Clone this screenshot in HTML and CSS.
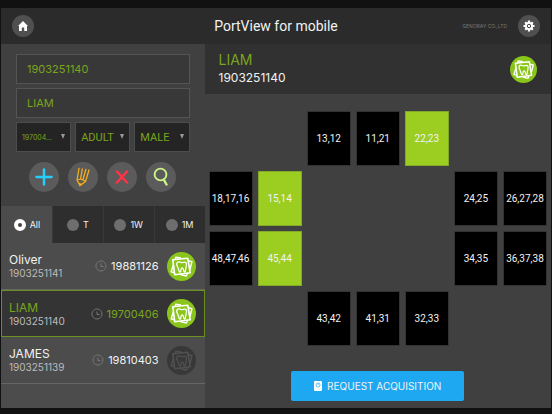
FILE: index.html
```html
<!DOCTYPE html>
<html lang="en">
<head>
  <meta charset="UTF-8" />
  <meta name="viewport" content="width=device-width, initial-scale=1.0"/>
  <title>PortView for mobile</title>
  <link rel="stylesheet" href="styles.css">
</head>
<body>
  <svg class="symbols" aria-hidden="true">
    <symbol id="tooth" viewBox="0 0 30 30">
      <g fill="none" stroke="currentColor" stroke-linejoin="round" stroke-linecap="round">
        <path stroke-width="1.700" d="M6 8 L21.500 6.500 L24 21.500 L8 23.500 Z"/>
        <path stroke-width="1.500" d="M8.500 7.500 L9 5.500 L14 6.300 M22 9 L25.800 10 L23.800 18 M21 22.500 L20 24.800 L14.500 23.500 M6.500 13.500 L4.300 20.500 L7.500 21.500"/>
        <path stroke-width="1.300" d="M10.800 10.500 C12.300 9.500 13.500 11 15.200 11 C17 11 18.500 9.500 19.800 11 C21 13.500 19.300 16 19 19.500 C18.800 21.300 17.500 21 17.200 19 C16.800 16.500 15.300 15.500 14.600 17.500 C14.300 19 14.500 21 13.200 20.800 C12 20.200 12.200 17.500 11 15.500 C9.800 13.500 9.600 12 10.800 10.500 Z"/>
      </g>
    </symbol>
    <symbol id="clock" viewBox="0 0 12 12">
      <path fill="none" stroke="currentColor" d="M6 1 A5 5 0 1 1 5.900 1 Z M6 3.500 V6.500 H8.500"/>
    </symbol>
  </svg>

  <div class="app">
    <header class="topbar">
      <a href="#" class="round small" aria-label="Home">
        <svg width="12" height="12" viewBox="0 0 12 12"><path fill="#fff" d="M6 1 L11 6 H10 V11 H7.200 V7.500 H4.800 V11 H2 V6 H1 Z"/></svg>
      </a>
      <h1>PortView for mobile</h1>
      <div class="topbar-end">
        <span class="company">GENORAY CO.,LTD</span>
        <button class="round small" aria-label="Settings">
          <svg width="12" height="12" viewBox="0 0 12 12">
            <path stroke="#fff" stroke-width="2.200" d="M6 .5 V11.500 M.5 6 H11.500 M2.200 2.200 L9.800 9.800 M9.800 2.200 L2.200 9.800"/>
            <circle cx="6" cy="6" r="4" fill="#fff"/>
            <circle cx="6" cy="6" r="1.700" fill="#fff" stroke="#444"/>
          </svg>
        </button>
      </div>
    </header>

    <aside>
      <form class="patient-form">
        <input type="text" class="field" aria-label="Patient ID" value="1903251140">
        <input type="text" class="field" aria-label="Patient name" value="LIAM">
        <div class="selects">
          <div class="select-box"><select class="tiny" aria-label="Birth date"><option>197004...</option></select></div>
          <div class="select-box"><select aria-label="Age group"><option>ADULT</option></select></div>
          <div class="select-box"><select aria-label="Sex"><option>MALE</option></select></div>
        </div>
        <div class="actions">
          <button type="button" class="round" aria-label="Add">
            <svg width="18" height="18" viewBox="0 0 18 18"><path stroke="#22cfff" stroke-width="2.500" stroke-linecap="round" d="M9 1.500 V16.500 M1.500 9 H16.500"/></svg>
          </button>
          <button type="button" class="round" aria-label="Edit">
            <svg width="18" height="20" viewBox="0 0 18 20"><path fill="none" stroke="#f5ae18" stroke-width="1.300" stroke-linecap="round" stroke-linejoin="round" d="M5 1.500 L3 13 L6 18.500 L11.500 14.500 L15 3 M8.300 2 L6.500 12 M11.800 2.500 L9 12.500 M3 13 L6.500 12 L9 13 L11.500 14.500"/><path fill="#f5ae18" d="M4.300 15.500 L8.300 17 L5.700 19.500 Z"/></svg>
          </button>
          <button type="button" class="round" aria-label="Delete">
            <svg width="14" height="14" viewBox="0 0 14 14"><path stroke="#ff3248" stroke-width="2.500" stroke-linecap="round" d="M2 1.500 L12 12.500 M12 1.500 L2 12.500"/></svg>
          </button>
          <button type="button" class="round" aria-label="Search">
            <svg width="18" height="20" viewBox="0 0 18 20"><g fill="none" stroke="#cdf486" stroke-linecap="round"><circle cx="8.500" cy="7.500" r="5.900" stroke-width="1.900"/><path stroke-width="2.400" d="M12 13 L14.500 17.500"/></g></svg>
          </button>
        </div>
      </form>

      <div class="filters">
        <label><input type="radio" name="period" checked>All</label>
        <label><input type="radio" name="period">T</label>
        <label><input type="radio" name="period">1W</label>
        <label><input type="radio" name="period">1M</label>
      </div>

      <ul class="patients">
        <li>
          <div class="who"><strong>Oliver</strong><span>1903251141</span></div>
          <svg class="clock"><use href="#clock"/></svg>
          <span class="date">19881126</span>
          <svg class="tooth"><use href="#tooth"/></svg>
        </li>
        <li class="selected">
          <div class="who"><strong>LIAM</strong><span>1903251140</span></div>
          <svg class="clock"><use href="#clock"/></svg>
          <span class="date">19700406</span>
          <svg class="tooth"><use href="#tooth"/></svg>
        </li>
        <li>
          <div class="who"><strong>JAMES</strong><span>1903251139</span></div>
          <svg class="clock"><use href="#clock"/></svg>
          <span class="date">19810403</span>
          <svg class="tooth off"><use href="#tooth"/></svg>
        </li>
      </ul>
    </aside>

    <main>
      <div class="current">
        <div>
          <h2>LIAM</h2>
          <p>1903251140</p>
        </div>
        <svg class="tooth"><use href="#tooth"/></svg>
      </div>

      <div class="teeth">
        <button class="col3">13,12</button>
        <button>11,21</button>
        <button class="on">22,23</button>
        <button class="col1">18,17,16</button>
        <button class="on">15,14</button>
        <button class="col6">24,25</button>
        <button>26,27,28</button>
        <button class="col1">48,47,46</button>
        <button class="on">45,44</button>
        <button class="col6">34,35</button>
        <button>36,37,38</button>
        <button class="col3">43,42</button>
        <button>41,31</button>
        <button>32,33</button>
      </div>

      <button class="request">
        <svg width="8" height="10" viewBox="0 0 8 10"><rect width="8" height="10" rx="1" fill="#fff"/><circle cx="4" cy="4" r="2" fill="none" stroke="#1fa8f2" stroke-width=".7"/><path stroke="#1fa8f2" stroke-width=".6" d="M3.500 4 L5 2.500"/></svg>
        REQUEST ACQUISITION
      </button>
    </main>
  </div>
</body>
</html>
```
FILE: styles.css
```css
:root {
  --bg: #111;
  --panel: #404040;
  --bar: #2b2b2b;
  --row: #4c4c4c;
  --line: #545454;
  --green: #7aa51c;
  --lime: #9ccd21;
  --badge: #8ac51b;
  --text: #f2f2f2;
}

* {
  margin: 0;
  padding: 0;
  box-sizing: border-box;
}

body {
  background: var(--bg);
  font-family: Inter, "Liberation Sans", sans-serif;
  font-size: 11px;
  color: var(--text);
}

button, input, select {
  font: inherit;
  color: inherit;
  border: none;
}

.symbols {
  display: none;
}

.app {
  display: grid;
  grid-template-columns: 37fr 63fr;
  grid-template-rows: 36px 1fr;
  min-height: 100vh;
  border: solid var(--bg);
  border-width: 8px 1px 6px;
}

.topbar {
  grid-column: 1 / -1;
  display: grid;
  grid-template-columns: 1fr auto 1fr;
  align-items: center;
  padding: 0 11px;
  background: var(--bar);
}

.topbar h1 {
  font-family: Roboto, sans-serif;
  font-size: 14px;
  font-weight: 400;
}

.topbar-end {
  display: flex;
  justify-content: flex-end;
  align-items: center;
  gap: 11px;
}

.company {
  font-size: 5px;
  color: #777;
}

.round {
  display: flex;
  align-items: center;
  justify-content: center;
  width: 30px;
  height: 30px;
  border-radius: 50%;
  background: #5b5b5b;
}

.round.small {
  width: 22px;
  height: 22px;
  background: #505050;
}

aside {
  display: flex;
  flex-direction: column;
  background: var(--row);
}

.patient-form {
  display: flex;
  flex-direction: column;
  gap: 4px;
  padding: 10px 15px 14px;
  background: var(--panel);
  color: var(--green);
}

.field {
  width: 100%;
  height: 30px;
  padding: 0 10px;
  background: #383838;
  border: 1px solid var(--line);
}

.selects {
  display: grid;
  grid-template-columns: repeat(3, 1fr);
  gap: 4px;
}

.select-box {
  position: relative;
}

.select-box::after {
  content: "";
  position: absolute;
  top: 12px;
  right: 6px;
  border: solid transparent;
  border-width: 5px 2px 0;
  border-top-color: #999;
  pointer-events: none;
}

select {
  appearance: none;
  width: 100%;
  height: 30px;
  padding-left: 5px;
  font-family: Roboto, sans-serif;
  background: #242424;
  border: 1px solid #4c4c4c;
}

select.tiny {
  font-family: Inter, sans-serif;
  font-size: 7px;
}

.actions {
  display: flex;
  justify-content: center;
  gap: 9px;
  padding-top: 6px;
}

.filters {
  display: grid;
  grid-template-columns: repeat(4, 1fr);
  height: 37px;
}

.filters label {
  display: flex;
  align-items: center;
  justify-content: center;
  gap: 4px;
  font-size: 9px;
  background: #2e2e2e;
  border-left: 1px solid #393939;
}

.filters label:has(:checked) {
  background: var(--row);
  border-color: var(--row);
}

.filters input {
  appearance: none;
  width: 12px;
  height: 12px;
  border-radius: 50%;
  background: #6e6e6e;
}

.filters input:checked {
  background: #444;
  border: 4px solid #fff;
}

.patients {
  list-style: none;
}

.patients li {
  display: flex;
  align-items: center;
  gap: 4px;
  height: 47px;
  padding: 0 9px 0 8px;
  border-bottom: 1px solid #666;
}

.patients .selected {
  padding: 0 8px 0 7px;
  background: #343434;
  border: 1px solid #6a9020;
}

.who {
  flex: 1;
}

.who strong {
  display: block;
  font-size: 12px;
  line-height: 15px;
  font-weight: 400;
}

.who span {
  display: block;
  font-size: 10px;
  line-height: 13px;
  color: #bbb;
}

.selected strong, .selected .date {
  color: var(--green);
}

.clock {
  width: 12px;
  height: 12px;
  color: #777;
}

.date {
  margin-right: 4px;
}

.tooth {
  width: 29px;
  height: 29px;
  border-radius: 50%;
  background: var(--badge);
  color: #fff;
}

.tooth.off {
  background: #383838;
  color: #505050;
}

main {
  display: flex;
  flex-direction: column;
  background: var(--panel);
}

.current {
  display: flex;
  justify-content: space-between;
  align-items: center;
  height: 50px;
  padding: 0 14px;
  background: #313131;
}

.current h2 {
  font-size: 14px;
  line-height: 18px;
  font-weight: 400;
  color: var(--green);
}

.current p {
  font-size: 12px;
  line-height: 18px;
}

.current .tooth {
  width: 27px;
  height: 27px;
}

.teeth {
  display: grid;
  grid-template-columns: repeat(7, 1fr);
  grid-auto-rows: 55px;
  gap: 5px;
  padding: 17px 4px 25px;
}

.teeth button {
  font-family: Roboto, sans-serif;
  font-size: 10px;
  background: #000;
  border: 1px solid #333;
}

.teeth .on {
  background: var(--lime);
  border-color: #82a927;
}

.col1 {
  grid-column: 1;
}

.col3 {
  grid-column: 3;
}

.col6 {
  grid-column: 6;
}

.request {
  display: flex;
  align-items: center;
  justify-content: center;
  gap: 5px;
  width: 50%;
  height: 30px;
  margin: 0 auto;
  font-size: 10px;
  background: #1fa8f2;
  border-radius: 2px;
}
```
